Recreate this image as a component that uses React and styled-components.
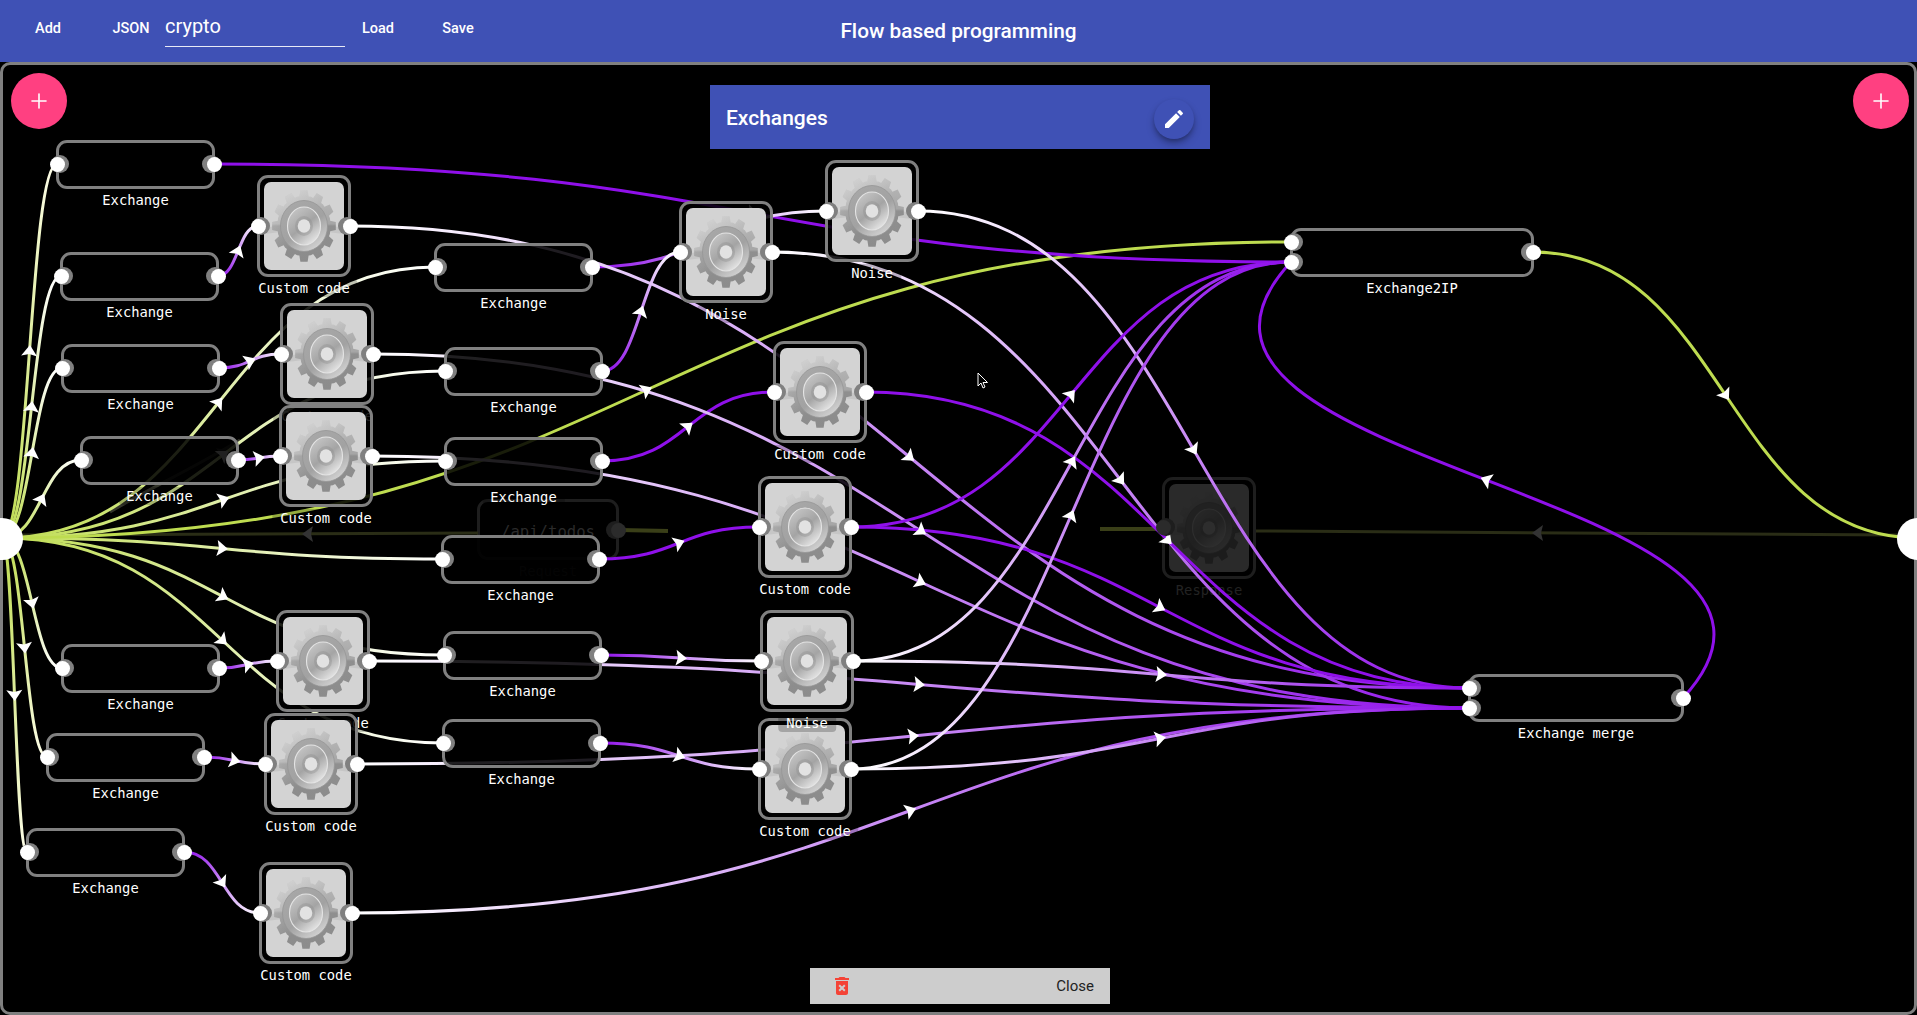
import React from 'react';
import styled, { createGlobalStyle } from 'styled-components';
import { Plus } from 'lucide-react';
import { MdEdit, MdDeleteForever } from 'react-icons/md';

const INDIGO = '#3f51b5';
const GREY = '#808080';
const GREEN = '#bedc50';
const PURPLE = '#8f10ea';
const WHITE = '#ffffff';

// the canvas padding box starts here on the page, node data is in page coords
const ORIGIN_X = 3;
const ORIGIN_Y = 65;
const STAGE_W = 1911;
const STAGE_H = 947;

const GlobalStyle = createGlobalStyle`
  html, body {
    margin: 0;
    height: 100%;
    overflow: hidden;
    background: #000;
    font-family: Roboto, "Liberation Sans", sans-serif;
  }
`;

const Page = styled.div`
  display: flex;
  flex-direction: column;
  height: 1015px;
  width: 1917px;
`;

const AppBar = styled.header`
  display: grid;
  grid-template-columns: 1fr auto 1fr;
  align-items: center;
  height: 62px;
  flex: none;
  background: ${INDIGO};
  color: #fff;
`;

const Toolbar = styled.div`
  display: flex;
  align-items: center;
  height: 100%;
  padding-bottom: 6px;
  box-sizing: border-box;
`;

const ToolButton = styled.button`
  width: ${(p) => p.$w}px;
  border: 0;
  padding: 0;
  background: none;
  color: #fff;
  font: 500 14.5px Roboto, sans-serif;
  cursor: pointer;
`;

const NameInput = styled.input`
  width: 180px;
  height: 35px;
  margin: 3px 0 0 -1px;
  padding: 3px 0 9px;
  box-sizing: border-box;
  border: 0;
  border-bottom: 1px solid #e8eaf6;
  outline: none;
  background: none;
  color: #fff;
  font: 400 20px Roboto, sans-serif;
  line-height: 22px;
`;

const Title = styled.h1`
  margin: 0;
  font: 500 20.8px Roboto, sans-serif;
`;

const Canvas = styled.main`
  position: relative;
  flex: 1;
  border: 3px solid ${GREY};
  border-radius: 10px;
  background: #000;
`;

const EdgeLayer = styled.svg`
  position: absolute;
  left: 0;
  top: 0;
`;

const Fab = styled.button`
  position: absolute;
  top: 8px;
  ${(p) => (p.$right ? 'right: 5.5px;' : 'left: 7.5px;')}
  display: flex;
  align-items: center;
  justify-content: center;
  width: 56px;
  height: 56px;
  border: 0;
  padding: 0;
  border-radius: 50%;
  background: #ff4081;
  color: #fff;
  z-index: 5;
`;

const GroupHeader = styled.div`
  position: absolute;
  top: 20px;
  left: 707px;
  width: 500px;
  height: 64px;
  box-sizing: border-box;
  padding: 0 15px 0 16px;
  display: flex;
  align-items: center;
  justify-content: space-between;
  background: ${INDIGO};
  color: #fff;
  z-index: 5;
`;

const GroupName = styled.span`
  margin-top: 2px;
  font: 500 21px Roboto, sans-serif;
`;

const EditButton = styled.button`
  display: flex;
  align-items: center;
  justify-content: center;
  width: 40px;
  height: 40px;
  margin: 3px 1px 0 0;
  border: 0;
  padding: 0;
  border-radius: 50%;
  background: ${INDIGO};
  color: #fff;
  box-shadow: 0 3px 5px -1px rgba(0, 0, 0, 0.3), 0 5px 8px rgba(0, 0, 0, 0.2);
`;

const CloseBar = styled.div`
  position: absolute;
  left: 807px;
  bottom: 8px;
  width: 300px;
  height: 36px;
  box-sizing: border-box;
  padding: 0 16px 0 20px;
  display: flex;
  align-items: center;
  justify-content: space-between;
  background: #cdcdcd;
  color: #222;
  z-index: 5;
`;

const TrashButton = styled.span`
  display: flex;
  color: #f44336;
`;

const CloseText = styled.span`
  font: 400 15px Roboto, sans-serif;
`;

const NodeBox = styled.div`
  position: absolute;
  left: ${(p) => p.$x - ORIGIN_X}px;
  top: ${(p) => p.$y - ORIGIN_Y}px;
  width: ${(p) => p.$w}px;
  height: ${(p) => p.$h}px;
  box-sizing: border-box;
  border: 3px solid ${(p) => (p.$ghost ? '#1e1e1e' : GREY)};
  border-radius: 11px;
  background: rgba(0, 0, 0, 0.87);
  display: flex;
  align-items: center;
  justify-content: center;
`;

const NodeLabel = styled.div`
  position: absolute;
  top: 100%;
  left: 50%;
  transform: translateX(-50%);
  margin-top: 5px;
  padding: 0 8px;
  border-radius: 4px;
  background: rgba(0, 0, 0, 0.22);
  color: ${(p) => (p.$ghost ? '#232323' : '#fff')};
  font: 13.8px/18px "DejaVu Sans Mono", monospace;
  white-space: nowrap;
`;

const RouteText = styled.span`
  color: #2b2b2b;
  font: 15.6px "DejaVu Sans Mono", monospace;
  margin-top: 4px;
`;

const Port = styled.span`
  position: absolute;
  top: ${(p) => p.$top}px;
  ${(p) => (p.$side === 'in' ? 'left: -2px;' : 'right: -2px;')}
  width: 0;
  height: 0;
  z-index: 1;

  &::before {
    content: '';
    position: absolute;
    left: ${(p) => (p.$side === 'in' ? -6 : -12)}px;
    top: -9px;
    width: 18px;
    height: 18px;
    border-radius: 50%;
    background: ${(p) => (p.$ghost ? '#1e1e1e' : GREY)};
  }

  &::after {
    content: '';
    position: absolute;
    left: -7.5px;
    top: -7.5px;
    width: 15px;
    height: 15px;
    border-radius: 50%;
    background: ${(p) => (p.$ghost ? '#2b2b2b' : '#fff')};
  }
`;

const GearImage = styled.svg`
  display: block;
  opacity: ${(p) => (p.$ghost ? 0.2 : 1)};
`;

const Terminal = styled.span`
  position: absolute;
  top: ${538.5 - ORIGIN_Y - 21}px;
  ${(p) => (p.$right ? 'right: -25px;' : 'left: -22px;')}
  width: 42px;
  height: 42px;
  border-radius: 50%;
  background: #fff;
  z-index: 4;
`;

const Pointer = styled.svg`
  position: absolute;
  left: ${977 - ORIGIN_X}px;
  top: ${372 - ORIGIN_Y}px;
  z-index: 6;
`;

// x, y = top left of the frame. ins / outs = port offsets from the top
const exchange = (id, x, y) => ({ id, x, y, w: 159, h: 49, label: 'Exchange', ins: [24], outs: [24] });
const gear = (id, x, y, label = 'Custom code') => ({ id, x, y, w: 94, h: 102, gear: true, label, ins: [51], outs: [51] });

const nodes = [
  exchange('e1', 56, 140),
  exchange('e2', 60, 252),
  exchange('e4', 61, 344),
  exchange('e5', 80, 436),
  exchange('e9', 61, 644),
  exchange('e11', 46, 733),
  exchange('e13', 26, 828),
  exchange('e3', 434, 243),
  exchange('e6', 444, 347),
  exchange('e7', 444, 437),
  exchange('e8', 441, 535),
  exchange('e10', 443, 631),
  exchange('e12', 442, 719),
  gear('g1', 257, 175),
  gear('g2', 280, 303),
  gear('g3', 279, 405),
  gear('g4', 276, 610),
  gear('g5', 264, 713),
  gear('g6', 259, 862),
  gear('n1', 679, 201, 'Noise'),
  gear('n2', 825, 160, 'Noise'),
  gear('g7', 773, 341),
  gear('g8', 758, 476),
  gear('g10', 758, 718),
  gear('g9', 760, 610, 'Noise'),
  { id: 'ip', x: 1290, y: 228, w: 244, h: 49, label: 'Exchange2IP', ins: [14, 34], outs: [24] },
  { id: 'merge', x: 1468, y: 674, w: 216, h: 48, label: 'Exchange merge', ins: [14, 34], outs: [24] },
];

const terminals = {
  start: { px: 2, py: 538 },
  end: { px: 1918, py: 538 },
};

const findNode = (id) => nodes.find((n) => n.id === id);

const outPoint = (id, port = 0) => {
  if (terminals[id]) return [terminals[id].px, terminals[id].py];
  const n = findNode(id);
  return [n.x + n.w - 1, n.y + n.outs[port]];
};

const inPoint = (id, port = 0) => {
  if (terminals[id]) return [terminals[id].px, terminals[id].py];
  const n = findNode(id);
  return [n.x + 1, n.y + n.ins[port]];
};

// [from, to, to port, colour at start, colour at end]
const edges = [
  ['start', 'e1', 0, GREEN, '#fdfde8'],
  ['start', 'e2', 0, GREEN, WHITE],
  ['start', 'e4', 0, GREEN, WHITE],
  ['start', 'e5', 0, GREEN, WHITE],
  ['start', 'e9', 0, GREEN, WHITE],
  ['start', 'e11', 0, GREEN, '#fdfde8'],
  ['start', 'e13', 0, GREEN, '#fdfde8'],
  ['start', 'e3', 0, GREEN, WHITE],
  ['start', 'e6', 0, GREEN, WHITE],
  ['start', 'e7', 0, GREEN, WHITE],
  ['start', 'e8', 0, GREEN, WHITE],
  ['start', 'e10', 0, GREEN, WHITE],
  ['start', 'e12', 0, GREEN, WHITE],
  ['start', 'ip', 0, GREEN, GREEN],
  ['e2', 'g1', 0, PURPLE, WHITE],
  ['e4', 'g2', 0, PURPLE, WHITE],
  ['e5', 'g3', 0, PURPLE, WHITE],
  ['e9', 'g4', 0, PURPLE, WHITE],
  ['e11', 'g5', 0, PURPLE, WHITE],
  ['e13', 'g6', 0, PURPLE, WHITE],
  ['e1', 'ip', 1, PURPLE, PURPLE],
  ['e3', 'n2', 0, PURPLE, WHITE],
  ['e6', 'n1', 0, PURPLE, WHITE],
  ['e7', 'g7', 0, PURPLE, PURPLE],
  ['e8', 'g8', 0, PURPLE, PURPLE],
  ['e10', 'g9', 0, PURPLE, WHITE],
  ['e12', 'g10', 0, PURPLE, WHITE],
  ['g1', 'merge', 0, WHITE, PURPLE],
  ['g2', 'merge', 1, WHITE, PURPLE],
  ['g3', 'merge', 1, WHITE, PURPLE],
  ['g4', 'merge', 1, WHITE, PURPLE],
  ['g5', 'merge', 1, WHITE, PURPLE],
  ['g6', 'merge', 1, WHITE, PURPLE],
  ['n1', 'merge', 1, WHITE, PURPLE],
  ['n2', 'merge', 0, WHITE, PURPLE],
  ['g7', 'merge', 0, PURPLE, PURPLE],
  ['g8', 'merge', 0, PURPLE, PURPLE],
  ['g8', 'ip', 1, PURPLE, PURPLE],
  ['g9', 'merge', 0, WHITE, PURPLE],
  ['g9', 'ip', 1, WHITE, PURPLE],
  ['g10', 'merge', 1, WHITE, PURPLE],
  ['g10', 'ip', 1, WHITE, PURPLE],
  ['merge', 'ip', 1, PURPLE, PURPLE, { c1: [1876, 489], c2: [1096, 471] }],
  ['ip', 'end', 0, GREEN, GREEN],
];

const edgeGeometry = (edge) => {
  const [from, to, toPort, , , bend] = edge;
  const [x0, y0] = outPoint(from);
  const [x3, y3] = inPoint(to, toPort);
  const d = Math.abs(x3 - x0) / 2;
  const c1 = bend ? bend.c1 : [x0 + d, y0];
  const c2 = bend ? bend.c2 : [x3 - d, y3];
  const midX = (x0 + 3 * c1[0] + 3 * c2[0] + x3) / 8;
  const midY = (y0 + 3 * c1[1] + 3 * c2[1] + y3) / 8;
  const angle = (Math.atan2(y3 + c2[1] - c1[1] - y0, x3 + c2[0] - c1[0] - x0) * 180) / Math.PI;
  return {
    x0,
    y0,
    x3,
    y3,
    midX,
    midY,
    angle,
    d: `M${x0} ${y0} C${c1[0]} ${c1[1]} ${c2[0]} ${c2[1]} ${x3} ${y3}`,
  };
};

const ARROW = '6,0 -5,-8 -3,0 -5,8';

// one gear outline, 12 teeth, unit radius, scaled in the picture
const gearOutline = () => {
  const pts = [];
  const polar = (r, deg) => {
    const a = (deg * Math.PI) / 180;
    return `${(r * Math.cos(a)).toFixed(3)},${(r * Math.sin(a)).toFixed(3)}`;
  };
  for (let i = 0; i < 12; i++) {
    const a = i * 30;
    pts.push(polar(0.83, a - 10), polar(1, a - 6.5), polar(1, a + 6.5), polar(0.83, a + 10), polar(0.84, a + 15));
  }
  return pts.join(' ');
};

const GEAR_POINTS = gearOutline();

const GearDefs = () => (
  <defs>
    <linearGradient id="gearBody" x1="0.5" y1="0" x2="0.5" y2="1">
      <stop offset="0" stopColor="#bcbcbc" />
      <stop offset="0.47" stopColor="#a6a6a6" />
      <stop offset="0.5" stopColor="#8f8f8f" />
      <stop offset="1" stopColor="#8c8c8c" />
    </linearGradient>
    <linearGradient id="gearSheen" x1="0" y1="0" x2="0.55" y2="0.55">
      <stop offset="0" stopColor="#fff" stopOpacity="0.45" />
      <stop offset="1" stopColor="#fff" stopOpacity="0" />
    </linearGradient>
    <linearGradient id="gearDisc" x1="0.15" y1="0" x2="0.85" y2="1">
      <stop offset="0" stopColor="#a8a8a8" />
      <stop offset="0.55" stopColor="#a2a2a2" />
      <stop offset="1" stopColor="#dcdcdc" />
    </linearGradient>
    <linearGradient id="gearCore" x1="0.15" y1="0" x2="0.85" y2="1">
      <stop offset="0" stopColor="#c8c8c8" />
      <stop offset="0.5" stopColor="#a4a4a4" />
      <stop offset="1" stopColor="#f0f0f0" />
    </linearGradient>
  </defs>
);

const GearPicture = ({ ghost }) => (
  <GearImage $ghost={ghost} width="80" height="88" viewBox="0 0 80 88">
    <rect width="80" height="88" rx="7" fill="#d3d3d3" />
    <path d="M0 46 Q40 38 80 46 L80 52 Q40 46 0 52 Z" fill="#000" opacity="0.06" />
    <g transform="translate(40 44) scale(32 36)">
      <polygon points={GEAR_POINTS} fill="url(#gearBody)" />
      <polygon points={GEAR_POINTS} fill="url(#gearSheen)" />
    </g>
    <ellipse cx="40" cy="44" rx="23.5" ry="25.5" fill="url(#gearDisc)" stroke="#969696" strokeWidth="0.8" />
    <ellipse cx="40" cy="44" rx="16.5" ry="19" fill="url(#gearCore)" stroke="#e4e4e4" strokeWidth="1.1" />
    <ellipse cx="40" cy="44" rx="9" ry="10" fill="#8d8d8d" opacity="0.35" />
    <ellipse cx="40" cy="44" rx="6.3" ry="6.8" fill="#e2e2e2" />
  </GearImage>
);

const FlowNode = ({ node, ghost, children }) => (
  <NodeBox $x={node.x} $y={node.y} $w={node.w} $h={node.h} $ghost={ghost}>
    {node.ins.map((top) => (
      <Port key={`in${top}`} $side="in" $top={top - 3} $ghost={ghost} />
    ))}
    {node.outs.map((top) => (
      <Port key={`out${top}`} $side="out" $top={top - 3} $ghost={ghost} />
    ))}
    {node.gear && <GearPicture ghost={ghost} />}
    {children}
    <NodeLabel $ghost={ghost}>{node.label}</NodeLabel>
  </NodeBox>
);

const requestNode = { id: 'request', x: 477, y: 499, w: 142, h: 61, label: 'Request', ins: [], outs: [31] };
const responseNode = { id: 'response', x: 1162, y: 477, w: 94, h: 102, gear: true, label: 'Response', ins: [50], outs: [] };

export default function App() {
  return (
    <Page>
      <GlobalStyle />
      <AppBar>
        <Toolbar>
          <ToolButton $w={96}>Add</ToolButton>
          <ToolButton $w={70}>JSON</ToolButton>
          <NameInput readOnly value="crypto" />
          <ToolButton $w={66}>Load</ToolButton>
          <ToolButton $w={94}>Save</ToolButton>
        </Toolbar>
        <Title>Flow based programming</Title>
      </AppBar>
      <Canvas>
        <FlowNode node={requestNode} ghost>
          <RouteText>/api/todos</RouteText>
        </FlowNode>
        <FlowNode node={responseNode} ghost />
        <EdgeLayer
          width={STAGE_W}
          height={STAGE_H}
          viewBox={`${ORIGIN_X} ${ORIGIN_Y} ${STAGE_W} ${STAGE_H}`}
        >
          <GearDefs />
          <defs>
            {edges.map((edge, i) => {
              const g = edgeGeometry(edge);
              return (
                <linearGradient
                  key={i}
                  id={`edge${i}`}
                  gradientUnits="userSpaceOnUse"
                  x1={g.x0}
                  y1={g.y0}
                  x2={g.x3}
                  y2={g.y3 + 0.01}
                >
                  <stop offset="0" stopColor={edge[3]} />
                  <stop offset="1" stopColor={edge[4]} />
                </linearGradient>
              );
            })}
          </defs>
          {/* the dimmed flow behind the open group */}
          <g fill="none" stroke="#2a2d16" strokeWidth="3">
            <path d="M22 535 L478 533" />
            <path d="M1256 531 L1897 535" />
            <path d="M620 530 L668 531" stroke="#3a3f18" strokeWidth="4" />
            <path d="M1100 529 L1163 529" stroke="#3a3f18" strokeWidth="4" />
            <path d="M110 512 C150 488 190 470 240 440" stroke="#33342a" />
          </g>
          <g fill="#333">
            <polygon points={ARROW} transform="translate(308 534) rotate(180)" />
            <polygon points={ARROW} transform="translate(1538 533) rotate(180)" />
            <polygon points={ARROW} transform="translate(224 453) rotate(-28)" />
          </g>
          {edges.map((edge, i) => (
            <path key={i} d={edgeGeometry(edge).d} fill="none" stroke={`url(#edge${i})`} strokeWidth="3" />
          ))}
          {edges.map((edge, i) => {
            const g = edgeGeometry(edge);
            return (
              <polygon
                key={i}
                points={ARROW}
                fill="#fff"
                transform={`translate(${g.midX} ${g.midY}) rotate(${g.angle})`}
              />
            );
          })}
        </EdgeLayer>
        {nodes.map((node) => (
          <FlowNode key={node.id} node={node} />
        ))}
        <Terminal />
        <Terminal $right />
        <Fab>
          <Plus size={24} strokeWidth={1.6} />
        </Fab>
        <Fab $right>
          <Plus size={24} strokeWidth={1.6} />
        </Fab>
        <GroupHeader>
          <GroupName>Exchanges</GroupName>
          <EditButton>
            <MdEdit size={24} />
          </EditButton>
        </GroupHeader>
        <CloseBar>
          <TrashButton>
            <MdDeleteForever size={24} />
          </TrashButton>
          <CloseText>Close</CloseText>
        </CloseBar>
        <Pointer width="12" height="17" viewBox="0 0 12 17">
          <path d="M1 1 L1 14 L4 11 L6 16 L8 15 L6 10.5 L10.5 10.5 Z" fill="#000" stroke="#fff" strokeWidth="1" />
        </Pointer>
      </Canvas>
    </Page>
  );
}
